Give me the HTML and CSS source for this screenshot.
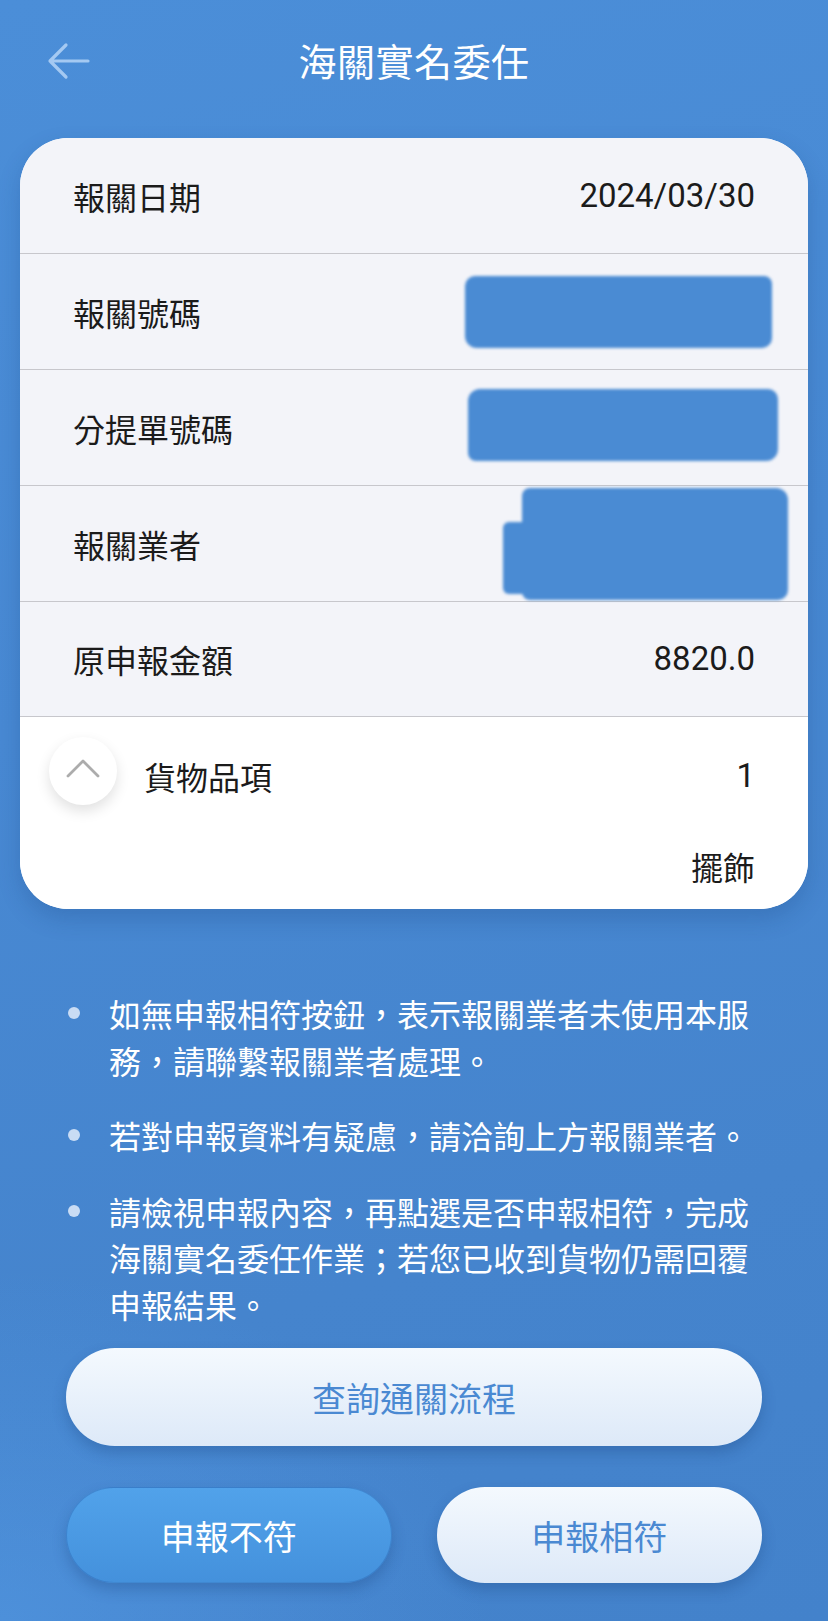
FILE: index.html
```html
<!DOCTYPE html>
<html lang="zh-Hant">
<head>
<meta charset="utf-8">
<title>海關實名委任</title>
<link rel="stylesheet" href="styles.css">
</head>
<body>
<div class="screen">
  <header class="topbar">
    <button class="back" aria-label="返回">
      <svg width="44" height="38" viewBox="0 0 44 38">
        <path d="M3 19 H41 M19 3 L3 19 L19 35" fill="none" stroke="#a4c9f2" stroke-width="3.2" stroke-linecap="round" stroke-linejoin="round"/>
      </svg>
    </button>
    <h1 class="title">海關實名委任</h1>
    <span class="spacer"></span>
  </header>

  <section class="card">
    <div class="row">
      <span class="label">報關日期</span>
      <span class="value num">2024/03/30</span>
    </div>
    <div class="row">
      <span class="label">報關號碼</span>
      <span class="redact redact-a"></span>
    </div>
    <div class="row">
      <span class="label">分提單號碼</span>
      <span class="redact redact-b"></span>
    </div>
    <div class="row">
      <span class="label">報關業者</span>
      <span class="redact redact-c"></span>
    </div>
    <div class="row">
      <span class="label">原申報金額</span>
      <span class="value num">8820.0</span>
    </div>
    <div class="items">
      <div class="items-head">
        <span class="toggle">
          <svg width="34" height="20" viewBox="0 0 34 20">
            <path d="M2 18 L17 3 L32 18" fill="none" stroke="#acacac" stroke-width="2.8" stroke-linecap="round" stroke-linejoin="round"/>
          </svg>
        </span>
        <span class="label">貨物品項</span>
        <span class="value num">1</span>
      </div>
      <div class="items-detail">擺飾</div>
    </div>
  </section>

  <ul class="notes">
    <li><span class="dot"></span><span class="note-text">如無申報相符按鈕，表示報關業者未使用本服務，請聯繫報關業者處理。</span></li>
    <li><span class="dot"></span><span class="note-text">若對申報資料有疑慮，請洽詢上方報關業者。</span></li>
    <li><span class="dot"></span><span class="note-text">請檢視申報內容，再點選是否申報相符，完成海關實名委任作業；若您已收到貨物仍需回覆申報結果。</span></li>
  </ul>

  <div class="actions">
    <button class="btn btn-light btn-wide">查詢通關流程</button>
    <div class="btn-row">
      <button class="btn btn-blue">申報不符</button>
      <button class="btn btn-light">申報相符</button>
    </div>
  </div>
</div>
</body>
</html>
```

FILE: styles.css
```css
* { box-sizing: border-box; }

html, body {
  margin: 0;
  padding: 0;
}

body {
  width: 828px;
  height: 1621px;
  overflow: hidden;
  font-family: "Noto Sans CJK TC", "Noto Sans", sans-serif;
  background: #4a8bd4;
}

.screen {
  width: 828px;
  height: 1621px;
  background:
    radial-gradient(ellipse 700px 500px at 0% 100%, rgba(88, 160, 235, 0.45), rgba(88, 160, 235, 0) 70%),
    linear-gradient(165deg, #4b8ed8 0%, #4889d3 40%, #4584cd 75%, #4382cb 100%);
  display: flex;
  flex-direction: column;
}

/* Header */
.topbar {
  height: 120px;
  display: grid;
  grid-template-columns: 1fr auto 1fr;
  align-items: center;
}

.back {
  justify-self: start;
  margin-left: 47px;
  margin-top: 2px;
  padding: 0;
  border: 0;
  background: none;
  display: flex;
}

.title {
  margin: 0;
  color: #ffffff;
  font-size: 38px;
  font-weight: 400;
  letter-spacing: 0.5px;
  line-height: 1;
}

/* Card */
.card {
  margin: 18px 20px 0;
  width: 788px;
  border-radius: 48px;
  overflow: hidden;
  background: #ffffff;
  box-shadow: 0 10px 22px rgba(20, 60, 120, 0.22);
}

.row {
  height: 116px;
  padding: 0 53px;
  display: flex;
  align-items: center;
  justify-content: space-between;
  background: #f3f4f9;
  border-bottom: 1.5px solid #c7c7cc;
}

.row:nth-child(5) {
  height: 115px;
}

.label {
  font-size: 32px;
  color: #1b1b1b;
  line-height: 40px;
}

.value {
  font-size: 32px;
  color: #1b1b1b;
  line-height: 40px;
}

.num {
  font-family: Roboto, "Noto Sans CJK TC", sans-serif;
  font-size: 33px;
  font-weight: 400;
}

/* redaction scribbles */
.redact {
  display: block;
  background: #4a8bd3;
  filter: blur(1.4px);
  position: relative;
}

.redact-a {
  width: 307px;
  height: 72px;
  margin-right: -17px;
  border-radius: 10px 8px 10px 12px;
}

.redact-b {
  width: 310px;
  height: 72px;
  margin-right: -23px;
  margin-top: -6px;
  border-radius: 12px 10px 12px 8px;
}

.redact-c {
  width: 266px;
  height: 112px;
  margin-right: -33px;
  border-radius: 8px 12px 10px 8px;
}

.redact-c::before {
  content: "";
  position: absolute;
  left: -19px;
  top: 34px;
  width: 30px;
  height: 72px;
  background: #4a8bd3;
  border-radius: 6px;
}

/* Items */
.items {
  background: #ffffff;
}

.items-head {
  height: 118px;
  padding: 0 53px 0 29px;
  display: flex;
  align-items: center;
}

.toggle {
  width: 68px;
  height: 68px;
  border-radius: 50%;
  background: #ffffff;
  box-shadow: 0 6px 14px rgba(0, 0, 0, 0.12);
  display: flex;
  align-items: center;
  justify-content: center;
  margin-right: 27px;
  margin-top: -10px;
  flex: none;
}

.toggle svg {
  margin-top: -6px;
}

.items-head .label {
  flex: 1;
}

.items-detail {
  padding: 11px 53px 23px;
  text-align: right;
  font-size: 32px;
  line-height: 40px;
  color: #1b1b1b;
}

/* Notes */
.notes {
  list-style: none;
  margin: 81px 0 0;
  padding: 0 58px 0 68px;
}

.notes li {
  display: flex;
  align-items: flex-start;
  color: #ffffff;
  font-size: 32px;
  line-height: 46.5px;
}

.notes li + li {
  margin-top: 29px;
}

.dot {
  flex: none;
  width: 12px;
  height: 12px;
  border-radius: 50%;
  background: #c9dcf4;
  margin-top: 17px;
  margin-right: 29px;
}

.note-text {
  flex: 1;
}

/* Actions */
.actions {
  margin-top: 21px;
  padding: 0 66px;
}

.btn {
  display: flex;
  align-items: center;
  justify-content: center;
  border: 0;
  border-radius: 50px;
  font-family: "Noto Sans CJK TC", "Noto Sans", sans-serif;
  font-size: 34px;
  font-weight: 400;
  padding: 0;
}

.btn-light {
  background: linear-gradient(180deg, #f4f9fe 0%, #dde9f8 100%);
  color: #4a89d2;
  box-shadow: 0 7px 14px rgba(20, 60, 120, 0.28);
}

.btn-blue {
  background: linear-gradient(180deg, #51a2ea 0%, #4491dc 100%);
  color: #ffffff;
  border: 1px solid rgba(45, 105, 180, 0.45);
  box-shadow: 0 7px 14px rgba(20, 60, 120, 0.28);
}

.btn-wide {
  width: 696px;
  height: 98px;
}

.btn-row {
  margin-top: 41px;
  display: grid;
  grid-template-columns: 1fr 1fr;
  gap: 45px;
}

.btn-row .btn {
  height: 96px;
  border-radius: 48px;
}
```
